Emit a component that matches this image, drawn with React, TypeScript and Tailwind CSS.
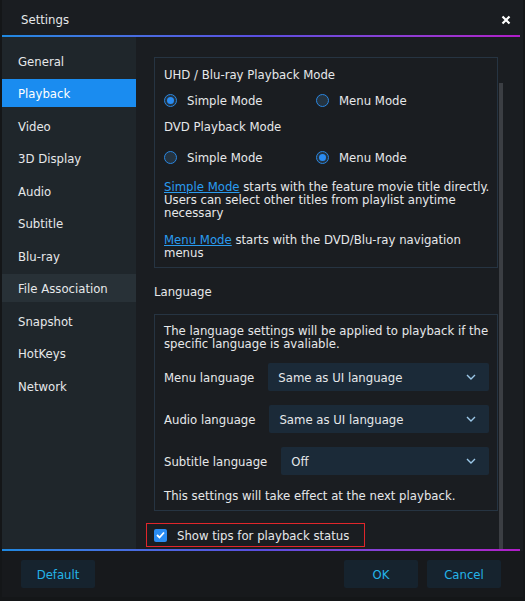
import React from "react";

const menu = [
  "General",
  "Playback",
  "Video",
  "3D Display",
  "Audio",
  "Subtitle",
  "Blu-ray",
  "File Association",
  "Snapshot",
  "HotKeys",
  "Network",
];

function Radio({ checked, label }: { checked: boolean; label: string }) {
  return (
    <div className="flex h-[13px] items-center gap-[10px]">
      <span className="flex h-[13px] w-[13px] items-center justify-center rounded-full border border-[#2a86e0] bg-[#243340]">
        {checked && <span className="h-[7px] w-[7px] rounded-full bg-[#2a8cf2]" />}
      </span>
      <span>{label}</span>
    </div>
  );
}

function Chevron() {
  return (
    <svg width="10" height="6" viewBox="0 0 10 6" fill="none">
      <path d="M1 1l4 4 4-4" stroke="#9cc8e8" strokeWidth="1.4" />
    </svg>
  );
}

function Select({ label, value }: { label: string; value: string }) {
  return (
    <div className="flex items-center gap-[14px]">
      <span className="whitespace-nowrap">{label}</span>
      <div className="flex h-[28px] flex-1 items-center justify-between rounded-[2px] bg-[#1b2a38] pl-[10px] pr-[13px]">
        <span>{value}</span>
        <Chevron />
      </div>
    </div>
  );
}

export default function App() {
  return (
    <div
      className="flex h-[601px] w-[525px] flex-col bg-[#141618] text-[13px] leading-[13px] text-[#e6e8ea]"
      style={{ fontFamily: '"DejaVu Sans Condensed", "DejaVu Sans", Tahoma, sans-serif' }}
    >
      <div className="mx-[2px] flex h-[597px] flex-col bg-[#1a1d21]">
        {/* title bar */}
        <div className="flex h-[35px] items-center justify-between pl-[19px] pr-[12px] pt-[4px]">
          <span>Settings</span>
          <svg width="10" height="10" viewBox="0 0 10 10">
            <path d="M1.5 1.5l7 7M8.5 1.5l-7 7" stroke="#ffffff" strokeWidth="2.2" />
          </svg>
        </div>
        <div className="h-[2px] w-[518px] bg-gradient-to-r from-[#1e88e0] via-[#5a4ee0] to-[#b01cc8]" />

        <div className="flex h-[512px]">
          {/* sidebar */}
          <div className="flex w-[134px] flex-col gap-[4.5px] bg-[#1f262b] pt-[9px]">
            {menu.map((m) => (
              <div
                key={m}
                className={
                  "flex h-[28px] items-center pl-[16px] pt-[2px] " +
                  (m === "Playback"
                    ? "bg-[#1a8cf0] text-white"
                    : m === "File Association"
                    ? "bg-[#283137]"
                    : "")
                }
              >
                {m}
              </div>
            ))}
          </div>

          {/* content */}
          <div className="flex flex-1 pl-[18px] pt-[20px]">
            <div className="flex w-[344px] flex-col">
              <div className="flex flex-col border border-[#263442] pb-[8px] pl-[9px] pr-[3px] pt-[10px]">
                <div>UHD / Blu-ray Playback Mode</div>
                <div className="mt-[13px] flex">
                  <div className="w-[152px]">
                    <Radio checked label="Simple Mode" />
                  </div>
                  <Radio checked={false} label="Menu Mode" />
                </div>
                <div className="mt-[13px]">DVD Playback Mode</div>
                <div className="mt-[18px] flex">
                  <div className="w-[152px]">
                    <Radio checked={false} label="Simple Mode" />
                  </div>
                  <Radio checked label="Menu Mode" />
                </div>
                <p className="mt-[16px]">
                  <span className="text-[#2a9cf0] underline">Simple Mode</span> starts with the feature movie
                  title directly. Users can select other titles from playlist anytime necessary
                </p>
                <p className="mt-[14px] pr-[20px]">
                  <span className="text-[#2a9cf0] underline">Menu Mode</span> starts with the DVD/Blu-ray
                  navigation menus
                </p>
              </div>

              <div className="mt-[17px]">Language</div>

              <div className="mt-[16px] flex flex-col border border-[#263442] pb-[8px] pl-[9px] pr-[8px] pt-[9px]">
                <p>The language settings will be applied to playback if the specific language is avaliable.</p>
                <div className="mt-[13px] flex flex-col gap-[14px]">
                  <Select label="Menu language" value="Same as UI language" />
                  <Select label="Audio language" value="Same as UI language" />
                  <Select label="Subtitle language" value="Off" />
                </div>
                <div className="mt-[14px]">This settings will take effect at the next playback.</div>
              </div>

              <div className="-ml-[8px] mt-[12px] flex h-[24px] w-[219px] items-center gap-[10px] border border-[#e0262b] pl-[7px]">
                <span className="flex h-[13px] w-[13px] items-center justify-center rounded-[2px] bg-[#2a8cf2]">
                  <svg width="9" height="8" viewBox="0 0 9 8" fill="none">
                    <path d="M1 4l2.5 2.5L8 1.5" stroke="#ffffff" strokeWidth="1.8" />
                  </svg>
                </span>
                <span>Show tips for playback status</span>
              </div>
            </div>
            <div className="ml-[1px] mt-[26px] h-[487px] w-[4px] bg-[#3b3e43]" />
          </div>
        </div>

        <div className="h-[2px] w-[518px] bg-gradient-to-r from-[#1e88e0] via-[#5a4ee0] to-[#b01cc8]" />

        {/* footer */}
        <div className="flex flex-1 items-start justify-between bg-[#17191c] pl-[19px] pr-[22px] pt-[9px]">
          <button className="h-[28px] w-[74px] rounded-[2px] bg-[#16232e] text-[#24b4e8]">Default</button>
          <div className="flex gap-[9px]">
            <button className="h-[28px] w-[74px] rounded-[2px] bg-[#16232e] text-[#24b4e8]">OK</button>
            <button className="h-[28px] w-[74px] rounded-[2px] bg-[#16232e] text-[#24b4e8]">Cancel</button>
          </div>
        </div>
      </div>
    </div>
  );
}
